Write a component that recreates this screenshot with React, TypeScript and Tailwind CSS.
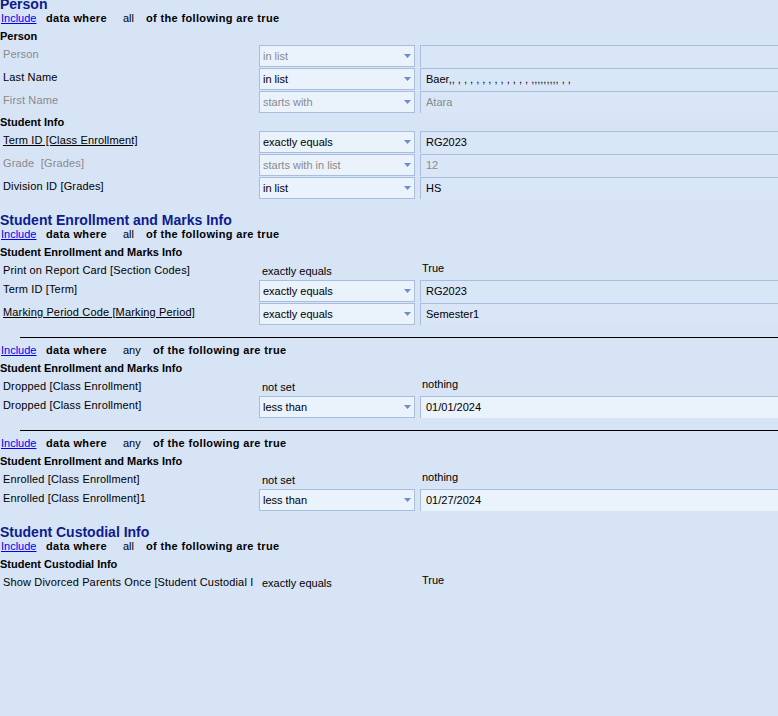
import React from "react";

type Cond = {
  label: string;
  op: string;
  value: string;
  kind: "box" | "plain";
  muted?: boolean;
  underline?: boolean;
  lightValue?: boolean;
};

function Caret() {
  return (
    <svg width="7" height="4" viewBox="0 0 7 4" className="shrink-0">
      <path d="M0 0H7L3.5 4Z" fill="#6b8ec6" />
    </svg>
  );
}

function SectionHeader({ title, first }: { title: string; first?: boolean }) {
  return (
    <div
      className={`h-[14px] text-[14px] leading-[14px] font-bold text-[#0d1b8e] whitespace-nowrap ${
        first ? "-mt-[3px]" : "mt-[13px]"
      }`}
    >
      {title}
    </div>
  );
}

function IncludeLine({ mode }: { mode: "all" | "any" }) {
  return (
    <div className="flex h-[14px] items-center text-[11px] leading-[14px] whitespace-nowrap text-black">
      <span className="w-[46px] pl-[1px] text-[#0000ee] underline">Include</span>
      <span className="w-[77px] font-bold tracking-[0.35px]">data where</span>
      <span className={mode === "all" ? "w-[23px]" : "w-[30px]"}>{mode}</span>
      <span className="font-bold tracking-[0.35px]">of the following are true</span>
    </div>
  );
}

function SubHeader({ title, afterRows }: { title: string; afterRows?: boolean }) {
  return (
    <div
      className={`h-[14px] text-[11px] leading-[14px] font-bold text-black whitespace-nowrap ${
        afterRows ? "mt-[1px]" : "mt-[4px]"
      }`}
    >
      {title}
    </div>
  );
}

function Row({ c }: { c: Cond }) {
  const tone = c.muted ? "text-[#8a8a8a]" : "text-black";
  const label = (
    <div
      className={`w-[253px] shrink-0 overflow-hidden whitespace-pre pl-[3px] pt-[2px] leading-[14px] tracking-[0.15px] ${tone}`}
    >
      <span className={c.underline ? "underline" : ""}>{c.label}</span>
    </div>
  );

  if (c.kind === "plain") {
    return (
      <div className="flex h-[19px] items-start text-[11px]">
        {label}
        <div className={`w-[162px] shrink-0 pl-[9px] pt-[3px] leading-[14px] whitespace-nowrap ${tone}`}>
          {c.op}
        </div>
        <div className={`pl-[7px] leading-[14px] whitespace-nowrap ${tone}`}>{c.value}</div>
      </div>
    );
  }

  return (
    <div className="flex h-[23px] items-start text-[11px]">
      {label}
      <div className="ml-[6px] flex h-[22px] w-[156px] shrink-0 items-center justify-between border border-[#a9bedd] bg-[#eaf2fc] pl-[3px] pr-[3px]">
        <span className={`whitespace-nowrap ${tone}`}>{c.op}</span>
        <Caret />
      </div>
      <div
        className={`ml-[5px] flex h-[22px] flex-1 items-center overflow-hidden whitespace-pre border-l border-t border-[#a9bedd] pl-[5px] ${
          c.lightValue ? "bg-[#eaf2fc]" : "bg-[#d9e6f7]"
        } ${tone}`}
      >
        {c.value}
      </div>
    </div>
  );
}

function Rows({ rows }: { rows: Cond[] }) {
  return (
    <div className="mt-[2px] flex flex-col">
      {rows.map((c, i) => (
        <Row key={i} c={c} />
      ))}
    </div>
  );
}

function Separator() {
  return <div className="ml-[20px] mt-[11px] mb-[5px] h-px bg-black" />;
}

const baer = "Baer,, , , , , , , , , , , , , ,,,,,,,,, , ,";

export default function App() {
  return (
    <div className="h-[716px] w-full overflow-hidden bg-[#d7e4f6] font-['Liberation_Sans',Arial,sans-serif] text-[11px] text-black">
      {/* Person */}
      <SectionHeader title="Person" first />
      <IncludeLine mode="all" />
      <SubHeader title="Person" />
      <Rows
        rows={[
          { label: "Person", op: "in list", value: "", kind: "box", muted: true },
          { label: "Last Name", op: "in list", value: baer, kind: "box" },
          { label: "First Name", op: "starts with", value: "Atara", kind: "box", muted: true },
        ]}
      />
      <SubHeader title="Student Info" afterRows />
      <Rows
        rows={[
          { label: "Term ID [Class Enrollment]", op: "exactly equals", value: "RG2023", kind: "box", underline: true },
          { label: "Grade  [Grades]", op: "starts with in list", value: "12", kind: "box", muted: true },
          { label: "Division ID [Grades]", op: "in list", value: "HS", kind: "box" },
        ]}
      />

      {/* Student Enrollment and Marks Info */}
      <SectionHeader title="Student Enrollment and Marks Info" />
      <IncludeLine mode="all" />
      <SubHeader title="Student Enrollment and Marks Info" />
      <Rows
        rows={[
          { label: "Print on Report Card [Section Codes]", op: "exactly equals", value: "True", kind: "plain" },
          { label: "Term ID [Term]", op: "exactly equals", value: "RG2023", kind: "box" },
          {
            label: "Marking Period Code [Marking Period]",
            op: "exactly equals",
            value: "Semester1",
            kind: "box",
            underline: true,
          },
        ]}
      />
      <Separator />
      <IncludeLine mode="any" />
      <SubHeader title="Student Enrollment and Marks Info" />
      <Rows
        rows={[
          { label: "Dropped [Class Enrollment]", op: "not set", value: "nothing", kind: "plain" },
          { label: "Dropped [Class Enrollment]", op: "less than", value: "01/01/2024", kind: "box", lightValue: true },
        ]}
      />
      <Separator />
      <IncludeLine mode="any" />
      <SubHeader title="Student Enrollment and Marks Info" />
      <Rows
        rows={[
          { label: "Enrolled [Class Enrollment]", op: "not set", value: "nothing", kind: "plain" },
          { label: "Enrolled [Class Enrollment]1", op: "less than", value: "01/27/2024", kind: "box", lightValue: true },
        ]}
      />

      {/* Student Custodial Info */}
      <SectionHeader title="Student Custodial Info" />
      <IncludeLine mode="all" />
      <SubHeader title="Student Custodial Info" />
      <Rows
        rows={[
          {
            label: "Show Divorced Parents Once [Student Custodial Info]",
            op: "exactly equals",
            value: "True",
            kind: "plain",
          },
        ]}
      />
    </div>
  );
}
